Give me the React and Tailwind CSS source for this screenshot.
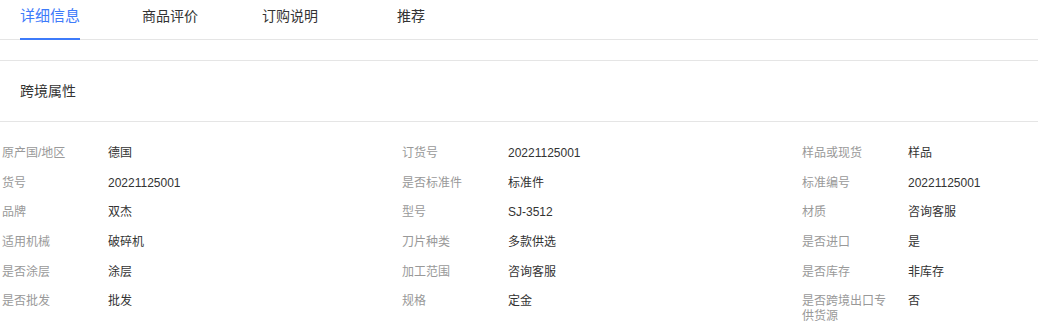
import React from "react";

const tabs = [
  { name: "详细信息", active: true, ml: "ml-[20px]" },
  { name: "商品评价", ml: "ml-[62px]" },
  { name: "订购说明", ml: "ml-[64px]" },
  { name: "推荐", ml: "ml-[79px]" },
];

const attrs = [
  ["原产国/地区", "德国"],
  ["订货号", "20221125001"],
  ["样品或现货", "样品"],
  ["货号", "20221125001"],
  ["是否标准件", "标准件"],
  ["标准编号", "20221125001"],
  ["品牌", "双杰"],
  ["型号", "SJ-3512"],
  ["材质", "咨询客服"],
  ["适用机械", "破碎机"],
  ["刀片种类", "多款供选"],
  ["是否进口", "是"],
  ["是否涂层", "涂层"],
  ["加工范围", "咨询客服"],
  ["是否库存", "非库存"],
  ["是否批发", "批发"],
  ["规格", "定金"],
  ["是否跨境出口专供货源", "否"],
];

export default function App() {
  return (
    <div
      className="w-[1038px] h-[330px] overflow-hidden bg-white"
      style={{ fontFamily: '"Liberation Sans", "Noto Sans CJK SC", sans-serif' }}
    >
      <div className="flex h-[40px] border-b border-[#e5e5e5]">
        {tabs.map((t) => (
          <div
            key={t.name}
            className={`${t.ml} flex items-start pt-[5px] ${
              t.active
                ? "text-[15px] text-[#3e7bfa] border-b-2 border-[#3e7bfa] -mb-px"
                : "text-[14px] text-[#333] pt-[6px]"
            }`}
          >
            {t.name}
          </div>
        ))}
      </div>
      <div className="h-[21px] border-b border-[#e5e5e5]" />
      <div className="h-[61px] border-b border-[#e5e5e5] pl-[20px] flex items-center text-[14px] text-[#333]">
        跨境属性
      </div>
      <div className="pl-[2px] pt-[17px] grid grid-cols-[400px_400px_400px] text-[12px] leading-[15px]">
        {attrs.map(([k, v]) => (
          <div key={k} className="flex py-[7.3px]">
            <div className="w-[90px] shrink-0 text-[#999]">{k}</div>
            <div className="ml-[16px] text-[#333]">{v}</div>
          </div>
        ))}
      </div>
    </div>
  );
}
